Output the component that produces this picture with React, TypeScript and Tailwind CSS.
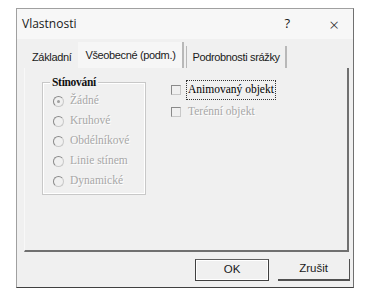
import React from "react";

const radios = ["Žádné", "Kruhové", "Obdélníkové", "Linie stínem", "Dynamické"];

const Radio: React.FC<{ label: string; checked?: boolean }> = ({ label, checked }) => (
  <div className="flex items-center h-[20px]">
    <span className="relative w-[11px] h-[11px] rounded-full border border-[#c8c8c8] border-t-[#8a8a8a] border-l-[#8a8a8a] bg-[#f0f0f0]">
      {checked && <span className="absolute left-[3px] top-[3px] w-[3px] h-[3px] rounded-full bg-[#a0a0a0]" />}
    </span>
    <span className="ml-[6px] text-[#a8a8a8] [text-shadow:1px_1px_0_#ffffff]">{label}</span>
  </div>
);

const App: React.FC = () => {
  return (
    <div className="w-[370px] h-[293px] bg-white pt-[8px] pl-[16px]">
      <div className="w-[338px] h-[280px] bg-[#f0f0f0] border border-[#a0a0a0] border-r-[#707070] border-b-[#404040] flex flex-col font-['Liberation_Sans',sans-serif] text-[#1a1a1a]">
        {/* title bar */}
        <div className="h-[30px] flex items-center bg-[#f7f7f7] pl-[5px] pr-[14px] text-[12px] font-['Open_Sans',sans-serif]">
          <span className="flex-1">Vlastnosti</span>
          <span className="w-[20px] text-center mr-[32px] text-[13px]">?</span>
          <span className="text-[17px] leading-none font-light">×</span>
        </div>

        {/* tabs */}
        <div className="flex items-end h-[29px] pl-[10px] text-[11px] tracking-[-0.35px]">
          <div className="h-[22px] px-[5px] flex items-center">Základní</div>
          <div className="h-[26px] px-[7px] ml-[2px] flex items-center bg-[#f6f6f6] border-r-2 border-[#b8b8b8]">Všeobecné (podm.)</div>
          <div className="h-[22px] px-[5px] ml-[2px] flex items-center border-l border-r-2 border-[#b8b8b8]">Podrobnosti srážky</div>
        </div>

        {/* panel */}
        <div className="ml-[7px] w-[325px] h-[184px] border-r-2 border-b-2 border-[#707070] border-l border-l-[#f8f8f8] flex pt-[14px] pl-[17px] font-['Liberation_Serif',serif] text-[11.5px]">
          <div className="relative w-[104px] h-[113px] border border-[#c8c8c8] outline outline-1 outline-white outline-offset-[-2px] pt-[8px] pl-[10px]">
            <span className="absolute -top-[9px] left-[7px] px-[2px] bg-[#f0f0f0] text-[#111] font-bold tracking-[-0.3px]">Stínování</span>
            {radios.map((r, i) => (
              <Radio key={r} label={r} checked={i === 0} />
            ))}
          </div>
          <div className="ml-[25px] -mt-[2px]">
            <div className="flex items-center h-[20px]">
              <span className="w-[10px] h-[10px] border border-[#c8c8c8] border-t-[#8a8a8a] border-l-[#8a8a8a]" />
              <span className="ml-[6px] px-[1px] outline outline-1 outline-dotted outline-[#333] text-black">Animovaný objekt</span>
            </div>
            <div className="flex items-center h-[20px] mt-[2px]">
              <span className="w-[10px] h-[10px] border border-[#c8c8c8] border-t-[#8a8a8a] border-l-[#8a8a8a]" />
              <span className="ml-[6px] px-[1px] text-[#a8a8a8] [text-shadow:1px_1px_0_#ffffff]">Terénní objekt</span>
            </div>
          </div>
        </div>

        {/* buttons */}
        <div className="flex justify-end gap-[9px] pr-[3px] mt-[7px] text-[11.5px]">
          <button className="w-[74px] h-[22px] border border-[#404040] border-t-[#606060] bg-[#f0f0f0] outline outline-1 outline-white outline-offset-[-2px]">OK</button>
          <button className="w-[72px] h-[22px] border-b-2 border-r border-[#505050] bg-[#f0f0f0]">Zrušit</button>
        </div>
      </div>
    </div>
  );
};

export default App;
